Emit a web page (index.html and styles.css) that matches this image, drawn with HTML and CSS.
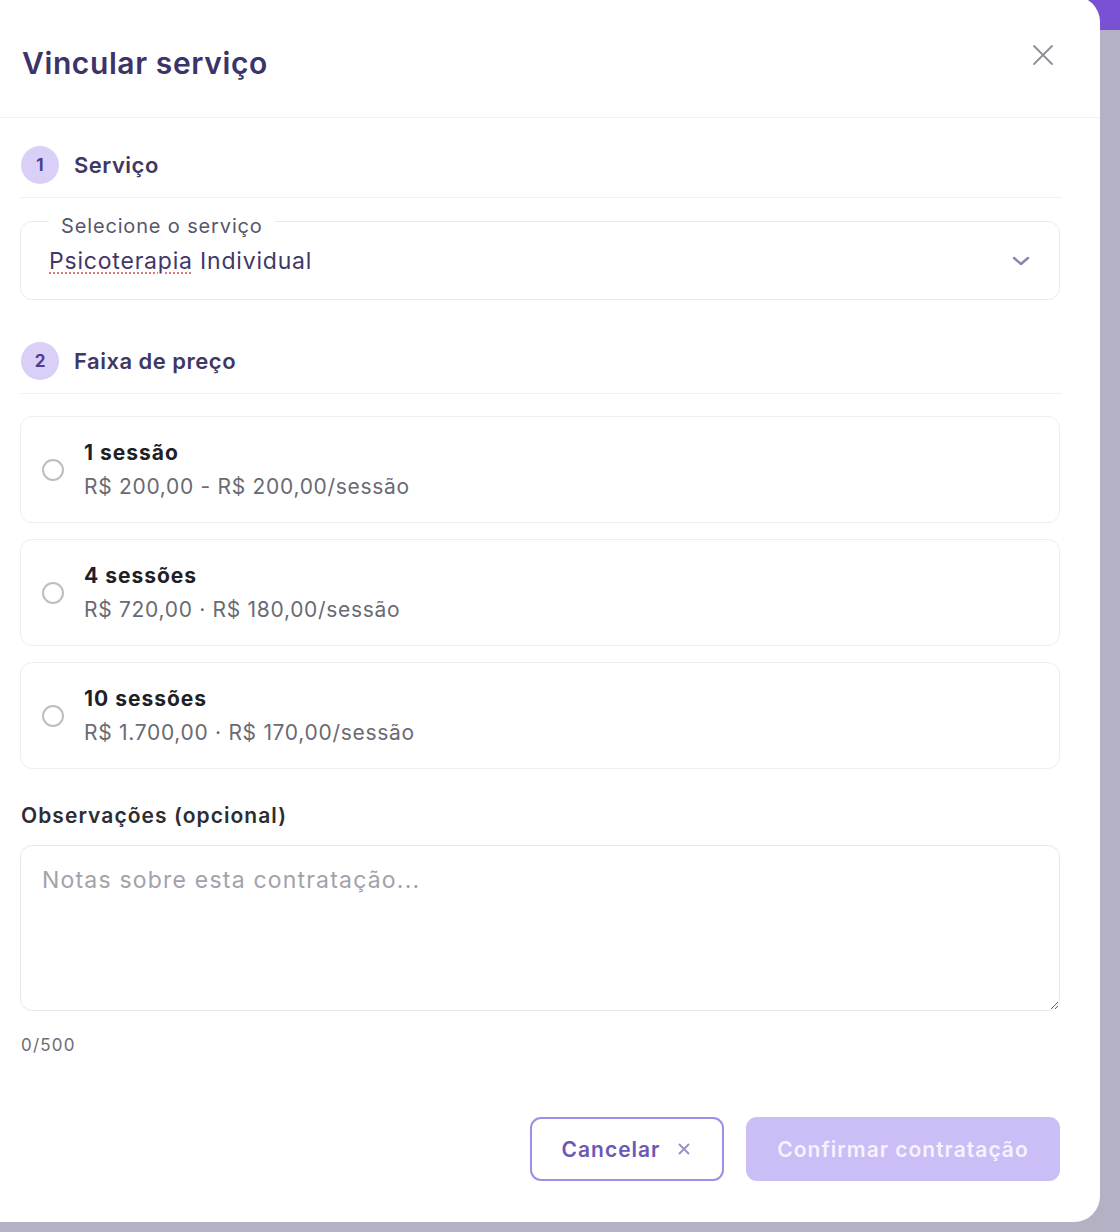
FILE: index.html
```html
<!DOCTYPE html>
<html lang="pt-BR">
<head>
<meta charset="utf-8">
<title>Vincular serviço</title>
<link rel="stylesheet" href="styles.css">
</head>
<body>
<div class="modal">
  <header class="modal-header">
    <h1 class="modal-title">Vincular serviço</h1>
    <button class="close-btn" aria-label="Fechar">
      <svg width="22" height="22" viewBox="0 0 22 22"><path d="M2 2L20 20M20 2L2 20" stroke="#8e8e96" stroke-width="1.8" stroke-linecap="round" fill="none"/></svg>
    </button>
  </header>

  <section class="step">
    <div class="step-head">
      <span class="step-num">1</span>
      <span class="step-label">Serviço</span>
    </div>
    <div class="select">
      <span class="select-label">Selecione o serviço</span>
      <span class="select-value"><span class="spell">Psicoterapia</span> Individual</span>
      <svg class="chevron" width="22" height="14" viewBox="0 0 22 14"><path d="M4 4L11 10L18 4" stroke="#8a82b4" stroke-width="2.4" stroke-linecap="round" stroke-linejoin="round" fill="none"/></svg>
    </div>
  </section>

  <section class="step step-2">
    <div class="step-head">
      <span class="step-num">2</span>
      <span class="step-label">Faixa de preço</span>
    </div>
    <div class="options">
      <label class="option">
        <span class="radio"></span>
        <span class="option-text">
          <span class="option-title">1 sessão</span>
          <span class="option-price">R$ 200,00 - R$ 200,00/sessão</span>
        </span>
      </label>
      <label class="option">
        <span class="radio"></span>
        <span class="option-text">
          <span class="option-title">4 sessões</span>
          <span class="option-price">R$ 720,00 · R$ 180,00/sessão</span>
        </span>
      </label>
      <label class="option">
        <span class="radio"></span>
        <span class="option-text">
          <span class="option-title">10 sessões</span>
          <span class="option-price">R$ 1.700,00 · R$ 170,00/sessão</span>
        </span>
      </label>
    </div>
  </section>

  <section class="notes">
    <div class="notes-label">Observações (opcional)</div>
    <textarea class="notes-input" placeholder="Notas sobre esta contratação..."></textarea>
    <div class="counter">0/500</div>
  </section>

  <footer class="modal-footer">
    <button class="btn btn-cancel">Cancelar
      <svg width="16" height="16" viewBox="0 0 16 16"><path d="M3.5 3.5L12.5 12.5M12.5 3.5L3.5 12.5" stroke="#9b90c8" stroke-width="2" stroke-linecap="round" fill="none"/></svg>
    </button>
    <button class="btn btn-confirm" disabled>Confirmar contratação</button>
  </footer>
</div>
</body>
</html>
```

FILE: styles.css
```css
* { box-sizing: border-box; }

html, body {
  margin: 0;
  padding: 0;
  height: 1232px;
  overflow: hidden;
}

body {
  background: linear-gradient(to bottom, #7a50d4 0, #7a50d4 30px, #b4b1c5 30px);
  font-family: Inter, "Liberation Sans", sans-serif;
}

.modal {
  width: 1120px;
  height: 1226px;
  margin: -4px 0 0 -20px;
  padding: 0 40px 0 40px;
  background: #ffffff;
  border-radius: 0 26px 26px 0;
  display: flex;
  flex-direction: column;
}

.modal-header {
  height: 122px;
  flex: none;
  display: flex;
  align-items: flex-start;
  justify-content: space-between;
  border-bottom: 1px solid #f3f2f6;
  margin: 0 -40px 0 -40px;
  padding: 0 46px 0 42px;
}

.modal-title {
  margin: 45px 0 0 0;
  font-size: 30px;
  line-height: 44px;
  font-weight: 600;
  color: #3c3468;
  letter-spacing: 0.6px;
}

.close-btn {
  margin-top: 48px;
  padding: 0;
  border: none;
  background: none;
  width: 22px;
  height: 22px;
}

.close-btn svg { display: block; }

.step-head {
  display: flex;
  align-items: center;
  gap: 15px;
  padding: 28px 0 13px 1px;
  border-bottom: 1px solid #f1f0f4;
  margin-right: -2px;
}

.step-num {
  width: 38px;
  height: 38px;
  border-radius: 50%;
  background: #dacff7;
  color: #4c3e8e;
  font-size: 17px;
  font-weight: 700;
  display: flex;
  align-items: center;
  justify-content: center;
}

.step-label {
  font-size: 22px;
  font-weight: 600;
  color: #3e3862;
  letter-spacing: 0.5px;
}

.select {
  position: relative;
  margin-top: 23px;
  height: 79px;
  border: 1.5px solid #ebebef;
  border-radius: 12px;
  display: flex;
  align-items: center;
  padding: 0 27px 0 28px;
}

.select-label {
  position: absolute;
  left: 28px;
  top: -9px;
  padding: 0 12px;
  background: #ffffff;
  font-size: 20px;
  line-height: 26px;
  letter-spacing: 0.85px;
  color: #57566a;
}

.select-value {
  flex: 1;
  font-size: 23px;
  letter-spacing: 0.8px;
  color: #3f3868;
}

.spell {
  text-decoration: underline dotted #e07a7a;
  text-decoration-thickness: 1.5px;
  text-underline-offset: 4px;
}

.chevron { display: block; }

.step-2 { margin-top: 14px; }

.options {
  margin-top: 22px;
  display: flex;
  flex-direction: column;
  gap: 16px;
}

.option {
  height: 107px;
  border: 1.5px solid #eeeef2;
  border-radius: 12px;
  display: flex;
  align-items: center;
  gap: 20px;
  padding-left: 21px;
}

.radio {
  width: 22px;
  height: 22px;
  border-radius: 50%;
  border: 2px solid #bdbdc3;
  flex: none;
}

.option-text {
  display: flex;
  flex-direction: column;
  gap: 7px;
}

.option-title {
  font-size: 21px;
  line-height: 27px;
  font-weight: 700;
  letter-spacing: 1px;
  color: #1f1f26;
}

.option-price {
  font-size: 21px;
  line-height: 27px;
  letter-spacing: 0.7px;
  color: #6a6a74;
}

.notes { margin-top: 33px; }

.notes-label {
  font-size: 21px;
  line-height: 28px;
  font-weight: 600;
  letter-spacing: 1.05px;
  color: #2c2c33;
  padding-left: 1px;
}

.notes-input {
  display: block;
  margin-top: 15px;
  width: 100%;
  height: 166px;
  border: 1.5px solid #e8e8ec;
  border-radius: 12px;
  padding: 20px 21px;
  font-family: Inter, "Liberation Sans", sans-serif;
  font-size: 23px;
  letter-spacing: 1.2px;
  color: #333;
  resize: vertical;
  outline: none;
}

.notes-input::placeholder { color: #a2a2aa; }

.counter {
  margin-top: 24px;
  font-size: 17px;
  letter-spacing: 1.2px;
  color: #6d6d77;
  padding-left: 1px;
}

.modal-footer {
  margin-top: auto;
  margin-bottom: 41px;
  display: flex;
  justify-content: flex-end;
  gap: 22px;
}

.btn {
  height: 64px;
  border-radius: 11px;
  font-family: Inter, "Liberation Sans", sans-serif;
  font-size: 21px;
  font-weight: 600;
  letter-spacing: 1px;
  display: flex;
  align-items: center;
  justify-content: center;
}

.btn-cancel {
  width: 194px;
  background: #ffffff;
  border: 2px solid #a28ce8;
  color: #6a58b6;
  gap: 16px;
}

.btn-cancel svg { display: block; }

.btn-confirm {
  width: 314px;
  background: #cbbdf6;
  border: none;
  color: #f6f2ff;
}
```
